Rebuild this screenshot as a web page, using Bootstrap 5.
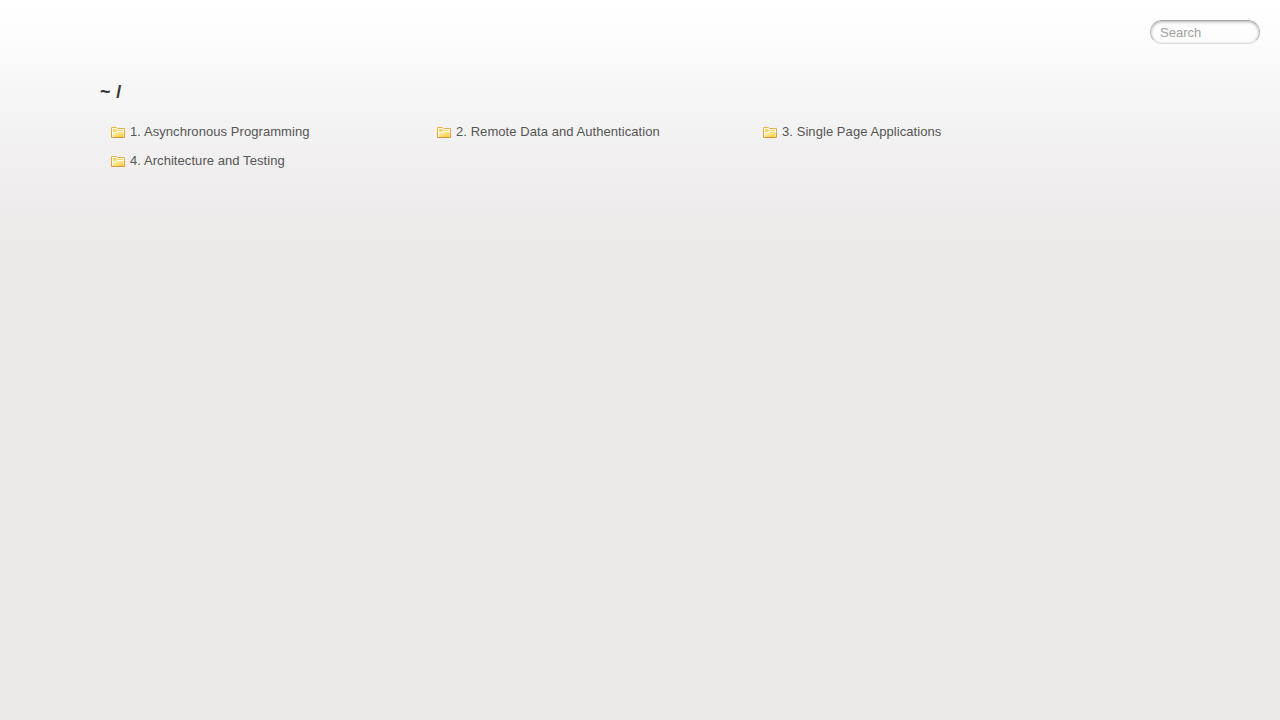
<!DOCTYPE html>
<html lang="en">
<head>
<meta charset="utf-8">
<title>listing directory /</title>
<link href="https://cdn.jsdelivr.net/npm/bootstrap@5.3.0/dist/css/bootstrap.min.css" rel="stylesheet">
<style>
body{font:13px/14px "Liberation Sans",Arial,sans-serif;color:#555;min-height:100vh;background:#ebeae8 linear-gradient(#fff 0,#fcfcfc 45px,#f7f7f7 85px,#f1eff0 160px,#eeecec 205px,#ebeae8 250px) no-repeat}
header{padding:20px 20px 0}
.search{width:110px;height:24px;padding:1px 9px 0;font-size:13px;line-height:22px;color:#555;border:1px solid;border-color:#a8a8a8 #bbb #ddd;border-radius:12px;background:#fdfdfd;box-shadow:inset 0 1px 3px #b0b0b0}
.search::placeholder{color:#a0a0a0;opacity:1}
main{padding:36px 100px 0}
h1{font-size:18px;line-height:24px;color:#343434;word-spacing:.3px;letter-spacing:.2px}
.files{padding-top:13px}
.files li{width:324px;height:27px;margin:1px}
.files a{color:#555;padding:7px 9px 6px;height:27px;letter-spacing:.065px}
.files svg{width:16px;height:16px;margin-right:4px}
</style>
</head>
<body>
<header class="d-flex justify-content-end">
<input class="search d-block" type="text" placeholder="Search" aria-label="Search">
</header>
<main>
<h1 class="fw-bold m-0">~ /</h1>
<ul class="files list-unstyled d-flex flex-wrap m-0">
<li><a class="d-flex align-items-center text-decoration-none" href="#"><svg viewBox="0 0 16 16"><use href="#folder"/></svg><span>1. Asynchronous Programming</span></a></li>
<li><a class="d-flex align-items-center text-decoration-none" href="#"><svg viewBox="0 0 16 16"><use href="#folder"/></svg><span>2. Remote Data and Authentication</span></a></li>
<li><a class="d-flex align-items-center text-decoration-none" href="#"><svg viewBox="0 0 16 16"><use href="#folder"/></svg><span>3. Single Page Applications</span></a></li>
<li><a class="d-flex align-items-center text-decoration-none" href="#"><svg viewBox="0 0 16 16"><use href="#folder"/></svg><span>4. Architecture and Testing</span></a></li>
</ul>
<svg width="0" height="0" class="position-absolute" aria-hidden="true">
<defs>
<linearGradient id="front" x1="0" y1="0" x2="1" y2="1"><stop offset="0" stop-color="#fff0a8"/><stop offset=".5" stop-color="#fbe07c"/><stop offset="1" stop-color="#f3ca25"/></linearGradient>
<linearGradient id="rim" x1="0" y1="0" x2="0" y2="1"><stop offset="0" stop-color="#e2b44c"/><stop offset="1" stop-color="#d8973f"/></linearGradient>
<symbol id="folder" viewBox="0 0 16 16">
<path d="M1.500 3.500h5l1 1h7v9h-13z" fill="#fffbe8" stroke="url(#rim)"/>
<path d="M3 5h3l1 1h6v1H7L6 8H3z" fill="#f5d56c"/>
<path d="M3 13V9h3.500L8 8h5.500v5z" fill="url(#front)"/>
<path d="M2 8.500h4.500l1.500-1h6" fill="none" stroke="#fffbe4" stroke-width=".9"/>
</symbol>
</defs>
</svg>
</main>
<script src="https://cdn.jsdelivr.net/npm/bootstrap@5.3.0/dist/js/bootstrap.bundle.min.js"></script>
</body>
</html>
